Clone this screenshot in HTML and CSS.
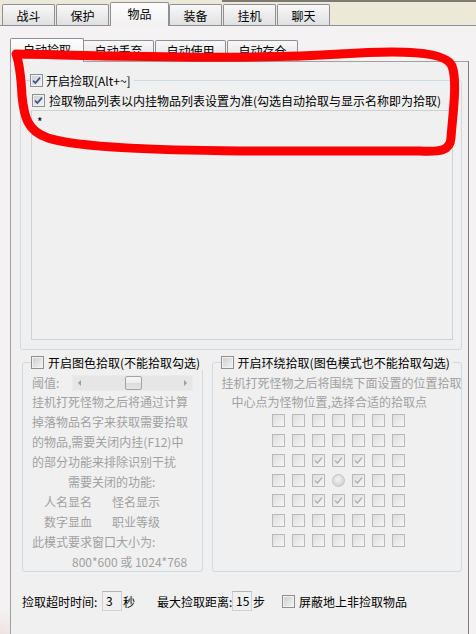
FILE: index.html
```html
<!DOCTYPE html>
<html lang="zh-CN">
<head>
    <meta charset="UTF-8">
    <meta name="viewport" content="width=device-width, initial-scale=1.0">
    <title>物品 - 自动捡取</title>
    <link rel="stylesheet" href="styles.css">
</head>
<body>
<div class="window">
    <div class="main-tabs">
        <div class="main-tab">战斗</div>
        <div class="main-tab">保护</div>
        <div class="main-tab active">物品</div>
        <div class="main-tab">装备</div>
        <div class="main-tab">挂机</div>
        <div class="main-tab">聊天</div>
    </div>

    <div class="main-page">
        <div class="sub-tabs">
            <div class="sub-tab active">自动捡取</div>
            <div class="sub-tab">自动丢弃</div>
            <div class="sub-tab">自动使用</div>
            <div class="sub-tab">自动存仓</div>
        </div>

        <div class="sub-page">
            <fieldset class="group pick">
                <legend><span class="check on"><svg viewBox="0 0 11 11"><path d="M2 5.6 4.4 8 9 2.6"/></svg></span>开启捡取[Alt+~]</legend>
                <div class="row"><span class="check on"><svg viewBox="0 0 11 11"><path d="M2 5.6 4.4 8 9 2.6"/></svg></span>捡取物品列表以内挂物品列表设置为准(勾选自动拾取与显示名称即为拾取)</div>
                <div class="listbox">*</div>
            </fieldset>

            <div class="lower">
                <fieldset class="group color">
                    <legend><span class="check"></span>开启图色拾取(不能拾取勾选)</legend>
                    <div class="threshold">
                        <span class="threshold-label">阈值:</span>
                        <div class="slider">
                            <span class="arrow arrow-left"></span>
                            <span class="thumb"></span>
                            <span class="arrow arrow-right"></span>
                        </div>
                    </div>
                    <p class="note">挂机打死怪物之后将通过计算</p>
                    <p class="note">掉落物品名字来获取需要拾取</p>
                    <p class="note">的物品,需要关闭内挂(F12)中</p>
                    <p class="note">的部分功能来排除识别干扰</p>
                    <p class="note center">需要关闭的功能:</p>
                    <div class="pair"><span>人名显名</span><span>怪名显示</span></div>
                    <div class="pair"><span>数字显血</span><span>职业等级</span></div>
                    <p class="note">此模式要求窗口大小为:</p>
                    <p class="note size">800*600 或 1024*768</p>
                </fieldset>

                <fieldset class="group around">
                    <legend><span class="check"></span>开启环绕拾取(图色模式也不能拾取勾选)</legend>
                    <p class="note first">挂机打死怪物之后将围绕下面设置的位置拾取</p>
                    <p class="note indent">中心点为怪物位置,选择合适的拾取点</p>
                    <div class="cells">
                        <span class="check dim"></span><span class="check dim"></span><span class="check dim"></span><span class="check dim"></span><span class="check dim"></span><span class="check dim"></span><span class="check dim"></span>
                        <span class="check dim"></span><span class="check dim"></span><span class="check dim"></span><span class="check dim"></span><span class="check dim"></span><span class="check dim"></span><span class="check dim"></span>
                        <span class="check dim"></span><span class="check dim"></span>
                        <span class="check dim"><svg viewBox="0 0 11 11"><path d="M2 5.6 4.4 8 9 2.6"/></svg></span>
                        <span class="check dim"><svg viewBox="0 0 11 11"><path d="M2 5.6 4.4 8 9 2.6"/></svg></span>
                        <span class="check dim"><svg viewBox="0 0 11 11"><path d="M2 5.6 4.4 8 9 2.6"/></svg></span>
                        <span class="check dim"></span><span class="check dim"></span>
                        <span class="check dim"></span><span class="check dim"></span>
                        <span class="check dim"><svg viewBox="0 0 11 11"><path d="M2 5.6 4.4 8 9 2.6"/></svg></span>
                        <span class="center-dot"></span>
                        <span class="check dim"><svg viewBox="0 0 11 11"><path d="M2 5.6 4.4 8 9 2.6"/></svg></span>
                        <span class="check dim"></span><span class="check dim"></span>
                        <span class="check dim"></span><span class="check dim"></span>
                        <span class="check dim"><svg viewBox="0 0 11 11"><path d="M2 5.6 4.4 8 9 2.6"/></svg></span>
                        <span class="check dim"><svg viewBox="0 0 11 11"><path d="M2 5.6 4.4 8 9 2.6"/></svg></span>
                        <span class="check dim"><svg viewBox="0 0 11 11"><path d="M2 5.6 4.4 8 9 2.6"/></svg></span>
                        <span class="check dim"></span><span class="check dim"></span>
                        <span class="check dim"></span><span class="check dim"></span><span class="check dim"></span><span class="check dim"></span><span class="check dim"></span><span class="check dim"></span><span class="check dim"></span>
                        <span class="check dim"></span><span class="check dim"></span><span class="check dim"></span><span class="check dim"></span><span class="check dim"></span><span class="check dim"></span><span class="check dim"></span>
                    </div>
                </fieldset>
            </div>

            <div class="options">
                <span class="opt-label">捡取超时时间:</span>
                <span class="field">3</span>
                <span class="unit">秒</span>
                <span class="opt-label far">最大捡取距离:</span>
                <span class="field">15</span>
                <span class="unit short">步</span>
                <span class="check"></span>
                <span class="opt-text">屏蔽地上非捡取物品</span>
            </div>
        </div>
    </div>

    <!-- red hand-drawn marker over the pick settings -->
    <svg class="mark" viewBox="0 0 476 634" width="476" height="634">
        <path d="M16 54 C120 56 250 60 340 54 C400 50 446 51 452 66 C458 82 452 120 451 138 C450 151 440 152 420 151 L240 151 C160 150 80 148 48 138 C27 131 24 116 22 96 C21 76 19 62 16 54 Z"/>
    </svg>
</div>
</body>
</html>
```

FILE: styles.css
```css
body {
    margin: 0;
    background: #f2f0f0;
    font-family: "Noto Sans CJK SC", "Noto Sans", sans-serif;
    font-size: 12px;
    color: #000;
}
.window {
    position: relative;
    width: 476px;
    height: 634px;
    overflow: hidden;
}

/* top tab strip */
.main-tabs {
    display: flex;
    align-items: flex-end;
    gap: 1px;
    height: 25px;
    box-sizing: border-box;
    padding-left: 2px;
    background: linear-gradient(#7b7b73, #7b7b73) 222px 0 / 254px 2px no-repeat, #ece9d8;
}
.main-tab {
    width: 53px;
    height: 21px;
    box-sizing: border-box;
    display: flex;
    align-items: center;
    justify-content: center;
    padding-top: 1px;
    border: 1px solid #8d9097;
    border-bottom: 0;
    border-radius: 2px 2px 0 0;
    background: linear-gradient(#f8f8f8, #e0e0e0);
    line-height: 1;
}
.main-tab.active {
    width: 59px;
    height: 24px;
    margin: 0 -1px -1px 0;
    padding: 0 0 2px;
    position: relative;
    z-index: 1;
    background: linear-gradient(#fdfdfd, #f1f1f1);
}

.main-page {
    height: 609px;
    box-sizing: border-box;
    border-top: 1px solid #8d9097;
    padding: 11px 7px 0 10px;
    background: radial-gradient(circle at 0 615px, rgba(226, 186, 186, 0.35), transparent 32px), #f4f2f2;
}

/* second tab strip */
.sub-tabs {
    display: flex;
    align-items: flex-end;
    gap: 1px;
    height: 24px;
}
.sub-tab {
    width: 71px;
    height: 21px;
    box-sizing: border-box;
    display: flex;
    align-items: center;
    justify-content: center;
    border: 1px solid #8d9097;
    border-bottom: 0;
    border-radius: 2px 2px 0 0;
    background: linear-gradient(#f8f8f8, #e0e0e0);
    line-height: 1;
}
.sub-tab.active {
    width: 74px;
    height: 24px;
    margin: 0 -2px -1px 0;
    padding-bottom: 2px;
    position: relative;
    z-index: 1;
    background: linear-gradient(#fdfdfd, #f0f0f0);
}

.sub-page {
    height: 600px;
    box-sizing: border-box;
    border: 1px solid;
    border-color: #a0a0a0 #7b7b7b #7b7b7b #a0a0a0;
    background: #f0f0f0;
    padding: 11px 6px 0 9px;
}

/* group boxes */
.group {
    margin: 0;
    min-width: 0;
    box-sizing: border-box;
    border: 1px solid #d2d9df;
    border-radius: 3px;
}
.group legend {
    display: flex;
    align-items: center;
    gap: 4px;
    height: 15px;
    padding: 0 3px 0 0;
    margin-left: -1px;
    line-height: 15px;
    color: #000;
    white-space: nowrap;
}
.pick {
    padding: 5px 8px 9px 10px;
}
.pick legend {
    gap: 3px;
}
.row {
    display: flex;
    align-items: center;
    gap: 4px;
    height: 14px;
    padding-left: 1px;
    white-space: nowrap;
}
.listbox {
    margin-top: 3px;
    height: 230px;
    box-sizing: border-box;
    border: 1px solid #cfd1d4;
    padding: 4px 5px;
    line-height: 14px;
    color: #000;
}

.lower {
    display: flex;
    gap: 9px;
    margin: 5px 0 0 2px;
}
.color,
.around {
    height: 217px;
    padding: 3px 0 0 9px;
    color: #a0a0a0;
}
.color {
    width: 181px;
}
.around {
    width: 251px;
}

.threshold {
    display: flex;
    align-items: center;
    height: 19px;
}
.threshold-label {
    width: 40px;
}
.slider {
    position: relative;
    width: 121px;
    height: 16px;
    box-sizing: border-box;
    border: 1px solid #ebebeb;
    background: #e6e6e6;
}
.arrow {
    position: absolute;
    top: 4px;
    border-top: 3px solid transparent;
    border-bottom: 3px solid transparent;
}
.arrow-left {
    left: 5px;
    border-right: 3px solid #9c9c9c;
}
.arrow-right {
    right: 5px;
    border-left: 3px solid #9c9c9c;
}
.thumb {
    position: absolute;
    left: 52px;
    top: 0;
    width: 17px;
    height: 14px;
    box-sizing: border-box;
    border: 1px solid #a3a3a3;
    border-radius: 2px;
    background: linear-gradient(#f6f6f6 0, #ececec 50%, #dadada 51%, #e4e4e4 100%);
}

.note {
    margin: 0;
    line-height: 20px;
    white-space: nowrap;
}
.note.first {
    line-height: 19px;
}
.note.center {
    padding-left: 36px;
}
.note.size {
    padding-left: 40px;
}
.note.indent {
    padding-left: 10px;
}
.pair {
    display: flex;
    gap: 20px;
    padding-left: 12px;
    line-height: 20px;
}

.cells {
    display: grid;
    grid-template-columns: repeat(7, 13px);
    gap: 7px;
    margin: 2px 0 0 50px;
}

/* checkboxes */
.check {
    flex: none;
    width: 13px;
    height: 13px;
    box-sizing: border-box;
    display: flex;
    align-items: center;
    justify-content: center;
    border: 1px solid #8e8f8f;
    background: linear-gradient(135deg, #c8cbd0, #f6f6f6);
    box-shadow: inset 0 0 0 1px #f1f1f1;
}
.check svg {
    width: 11px;
    height: 11px;
}
.check path {
    fill: none;
    stroke: #3e5189;
    stroke-width: 1.7;
}
.check.dim {
    border-color: #b9b9b9;
    background: linear-gradient(135deg, #dddddd, #f6f6f6);
    box-shadow: none;
}
.check.dim path {
    stroke: #a9a9a9;
    stroke-width: 1.2;
}
.center-dot {
    width: 13px;
    height: 13px;
    box-sizing: border-box;
    border-radius: 50%;
    border: 1px solid #c4c4c4;
    background: radial-gradient(circle at 45% 40%, #f4f4f4, #d2d2d2 75%);
}

/* bottom options */
.options {
    display: flex;
    align-items: center;
    height: 20px;
    margin: 19px 0 0 2px;
    white-space: nowrap;
}
.opt-label {
    width: 80px;
}
.opt-label.far {
    width: 75px;
}
.field {
    width: 20px;
    height: 20px;
    box-sizing: border-box;
    border: 1px solid #cdd0d4;
    border-top-color: #b3b5ba;
    padding-left: 3px;
    line-height: 18px;
}
.unit {
    width: 35px;
    box-sizing: border-box;
    padding-left: 1px;
}
.unit.short {
    width: 30px;
}
.opt-text {
    margin-left: 4px;
}

.mark {
    position: absolute;
    top: 0;
    left: 0;
    z-index: 5;
    pointer-events: none;
}
.mark path {
    fill: none;
    stroke: #ff0000;
    stroke-width: 9;
    stroke-linejoin: round;
}
```
